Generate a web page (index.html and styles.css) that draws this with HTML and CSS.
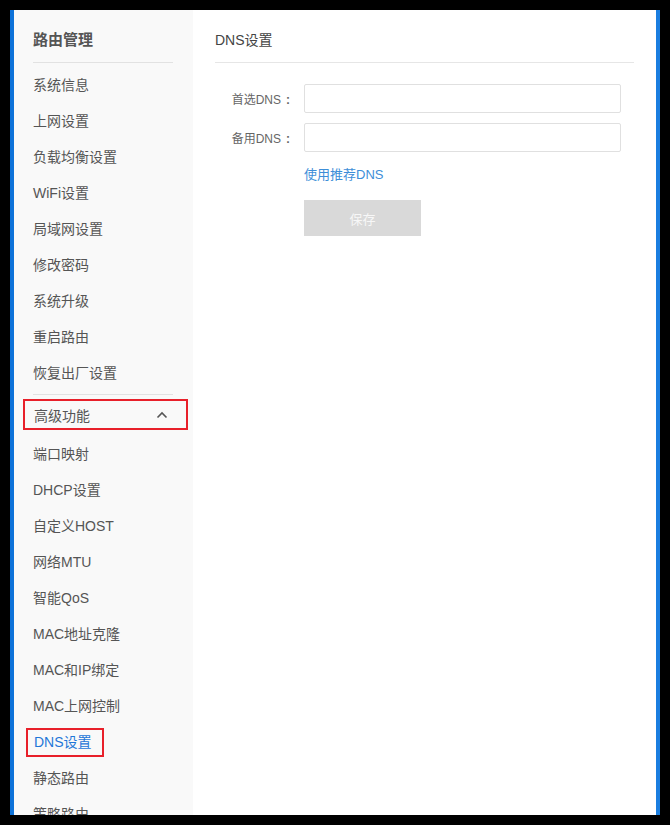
FILE: index.html
```html
<!DOCTYPE html>
<html lang="zh-CN">
<head>
<meta charset="UTF-8">
<meta name="viewport" content="width=device-width, initial-scale=1.0">
<title>DNS设置</title>
<link rel="stylesheet" href="styles.css">
</head>
<body>
<div class="frame">
<div class="window">
<div class="sidebar">
<div class="side-title">路由管理</div>
<div class="side-line"></div>
<a class="side-item">系统信息</a>
<a class="side-item">上网设置</a>
<a class="side-item">负载均衡设置</a>
<a class="side-item">WiFi设置</a>
<a class="side-item">局域网设置</a>
<a class="side-item">修改密码</a>
<a class="side-item">系统升级</a>
<a class="side-item">重启路由</a>
<a class="side-item">恢复出厂设置</a>
<div class="side-line line-low"></div>
<div class="side-group">
<span>高级功能</span>
<svg class="caret" width="12" height="8" viewBox="0 0 12 8"><path d="M1.5 6.5 L6 2 L10.5 6.5" fill="none" stroke="#555" stroke-width="1.6"/></svg>
</div>
<a class="side-item sub-first">端口映射</a>
<a class="side-item">DHCP设置</a>
<a class="side-item">自定义HOST</a>
<a class="side-item">网络MTU</a>
<a class="side-item">智能QoS</a>
<a class="side-item">MAC地址克隆</a>
<a class="side-item">MAC和IP绑定</a>
<a class="side-item">MAC上网控制</a>
<a class="side-item active"><span class="mark">DNS设置</span></a>
<a class="side-item">静态路由</a>
<a class="side-item">策略路由</a>
</div>
<div class="main">
<div class="main-title">DNS设置</div>
<div class="main-line"></div>
<div class="form-row">
<label class="form-label" for="dns1">首选DNS<span class="colon">:</span></label>
<input class="form-input" type="text" id="dns1">
</div>
<div class="form-row">
<label class="form-label" for="dns2">备用DNS<span class="colon">:</span></label>
<input class="form-input" type="text" id="dns2">
</div>
<div class="form-extra">
<a class="link">使用推荐DNS</a>
<button class="save-btn">保存</button>
</div>
</div>
</div>
</div>
</body>
</html>
```

FILE: styles.css
```css
body {
margin: 0;
padding: 0;
background-color: #000;
font-family: "Liberation Sans", Arial, "Noto Sans CJK SC", sans-serif;
}
.frame {
width: 670px;
height: 825px;
padding: 10px 10px 10px 10px;
box-sizing: border-box;
overflow: hidden;
}
.window {
display: flex;
height: 805px;
overflow: hidden;
border-left: 4px solid #0d72d9;
border-right: 4px solid #1a7ee0;
background-color: #fff;
}
.sidebar {
width: 179px;
flex-shrink: 0;
background-color: #f9f9f9;
padding: 12px 0 0 19px;
box-sizing: border-box;
}
.side-title {
height: 36px;
line-height: 36px;
font-size: 15px;
font-weight: bold;
color: #555;
}
.side-line {
width: 140px;
border-top: 1px solid #e2e2e2;
margin: 4px 0 4px 0;
}
.side-line.line-low {
margin: 3px 0 0 0;
}
.side-item {
display: block;
height: 36px;
line-height: 36px;
font-size: 14px;
color: #555;
cursor: pointer;
}
.side-item.sub-first {
margin-top: 6px;
}
.side-item.active {
color: #1f77d8;
}
.side-item .mark {
display: inline-block;
height: 25px;
line-height: 25px;
margin-left: -7px;
padding: 0 10px 0 6px;
border: 2px solid #e8202a;
}
.side-group {
display: flex;
align-items: center;
justify-content: space-between;
width: 165px;
height: 31px;
margin: 4px 0 0 -10px;
padding: 0 18px 0 9px;
box-sizing: border-box;
border: 2px solid #e8202a;
font-size: 14px;
color: #555;
}
.main {
flex: 1;
padding: 12px 22px 0 22px;
}
.main-title {
height: 36px;
line-height: 36px;
font-size: 14px;
color: #444;
}
.main-line {
border-top: 1px solid #e6e6e6;
margin: 4px 0 21px 0;
}
.form-row {
display: flex;
align-items: center;
margin-bottom: 10px;
}
.form-label {
width: 78px;
margin-right: 11px;
padding-right: 3px;
box-sizing: border-box;
text-align: right;
font-size: 12px;
color: #666;
}
.form-label .colon {
margin-left: 5px;
font-weight: bold;
}
.form-input {
width: 317px;
height: 29px;
border: 1px solid #e0e0e0;
border-radius: 2px;
box-sizing: border-box;
padding: 0 8px;
font-size: 13px;
}
.form-extra {
padding: 3px 0 0 89px;
}
.link {
display: block;
height: 20px;
line-height: 20px;
font-size: 13px;
color: #3d8ed8;
cursor: pointer;
}
.save-btn {
display: block;
width: 117px;
height: 36px;
margin-top: 15px;
border: none;
background-color: #d9d9d9;
color: #f7f7f7;
font-family: "Liberation Sans", Arial, "Noto Sans CJK SC", sans-serif;
font-size: 13px;
cursor: pointer;
}
```
